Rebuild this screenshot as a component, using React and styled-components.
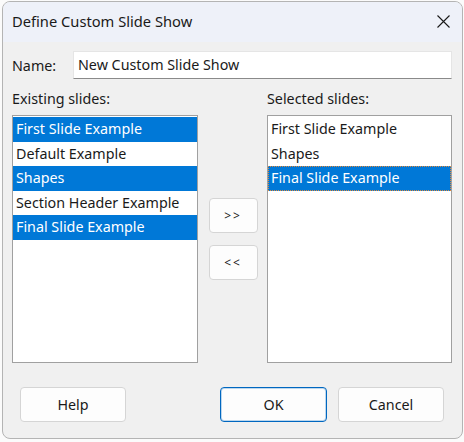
import React from "react";
import styled, { createGlobalStyle } from "styled-components";

const existingSlides = [
  { name: "First Slide Example", selected: true },
  { name: "Default Example", selected: false },
  { name: "Shapes", selected: true },
  { name: "Section Header Example", selected: false },
  { name: "Final Slide Example", selected: true },
];

const selectedSlides = [
  { name: "First Slide Example", selected: false },
  { name: "Shapes", selected: false },
  { name: "Final Slide Example", selected: true, focused: true },
];

const GlobalStyle = createGlobalStyle`
  body {
    margin: 0;
    background: #fbfbfb;
    font-family: "Noto Sans", "Open Sans", sans-serif;
  }
`;

const Window = styled.div`
  box-sizing: border-box;
  width: 461px;
  height: 438px;
  margin: 1px 0 0 2px;
  border: 1px solid #b4b4b4;
  border-radius: 8px;
  overflow: hidden;
  background: #f0f0f0;
  display: flex;
  flex-direction: column;
  color: #1a1a1a;
`;

const TitleBar = styled.div`
  height: 38px;
  flex-shrink: 0;
  background: #eef1f9;
  display: flex;
  align-items: center;
  justify-content: space-between;
  padding: 0 11px 2px 9px;
  font-size: 14.7px;
`;

const CloseButton = styled.button`
  border: 0;
  background: transparent;
  padding: 0;
  width: 16px;
  height: 16px;
  display: flex;
  align-items: center;
  justify-content: center;
`;

const Body = styled.div`
  flex: 1;
  display: flex;
  flex-direction: column;
  padding: 9px 10px 16px 9px;
  font-size: 14.3px;
`;

const NameRow = styled.div`
  display: flex;
  align-items: center;
  height: 28px;
`;

const NameLabel = styled.label`
  width: 61px;
`;

const NameInput = styled.input`
  flex: 1;
  box-sizing: border-box;
  height: 28px;
  border: 1px solid #e5e5e5;
  border-bottom-color: #8a8a8a;
  background: #fff;
  font: inherit;
  color: #1a1a1a;
  padding: 0 4px 2px;
  outline: none;
`;

const ListsArea = styled.div`
  display: grid;
  grid-template-columns: 186px 1fr 185px;
  grid-template-rows: auto 248px;
  margin-top: 7px;
`;

const ListLabel = styled.div`
  height: 29px;
  line-height: 26px;
`;

const ListBox = styled.div`
  box-sizing: border-box;
  border: 1px solid #a0a0a0;
  background: #fff;
  padding-top: 1px;
`;

const ListItem = styled.div`
  box-sizing: border-box;
  height: 24.5px;
  line-height: 23px;
  padding: 0 3px;
  white-space: nowrap;
  background: ${(p) => (p.$selected ? "#0078d7" : "transparent")};
  color: ${(p) => (p.$selected ? "#fff" : "#1a1a1a")};
  outline: ${(p) => (p.$focused ? "1px dotted #e08a3c" : "none")};
  outline-offset: -1px;
`;

const MoveButtons = styled.div`
  display: flex;
  flex-direction: column;
  align-items: center;
  justify-content: center;
  gap: 12px;
  padding-left: 1px;
`;

const Button = styled.button`
  box-sizing: border-box;
  width: ${(p) => p.$width || 106}px;
  height: 35px;
  border: 1px solid ${(p) => (p.$primary ? "#0067c0" : "#d5d5d5")};
  box-shadow: ${(p) => (p.$primary ? "inset 0 0 0 1px rgba(0,103,192,0.25)" : "none")};
  border-radius: 4px;
  background: #fdfdfd;
  font: inherit;
  font-size: ${(p) => (p.$small ? "12px" : "14.3px")};
  color: #1a1a1a;
  padding: 0;
  letter-spacing: ${(p) => (p.$small ? "2px" : "0")};
`;

const Footer = styled.div`
  display: flex;
  align-items: center;
  margin-top: auto;
  padding: 0 8px 0 8px;
`;

const Spacer = styled.div`
  flex: 1;
`;

const FooterGap = styled.div`
  width: 11px;
`;

function SlideList({ items }) {
  return (
    <ListBox>
      {items.map((item) => (
        <ListItem key={item.name} $selected={item.selected} $focused={item.focused}>
          {item.name}
        </ListItem>
      ))}
    </ListBox>
  );
}

export default function App() {
  return (
    <>
      <GlobalStyle />
      <Window>
        <TitleBar>
          <span>Define Custom Slide Show</span>
          <CloseButton aria-label="Close">
            <svg width="13" height="13" viewBox="0 0 13 13">
              <path d="M0.5 0.5 L12.5 12.5 M12.5 0.5 L0.5 12.5" stroke="#1a1a1a" strokeWidth="1.1" />
            </svg>
          </CloseButton>
        </TitleBar>
        <Body>
          <NameRow>
            <NameLabel>Name:</NameLabel>
            <NameInput defaultValue="New Custom Slide Show" />
          </NameRow>
          <ListsArea>
            <ListLabel>Existing slides:</ListLabel>
            <div />
            <ListLabel>Selected slides:</ListLabel>
            <SlideList items={existingSlides} />
            <MoveButtons>
              <Button $width={49} $small>&gt;&gt;</Button>
              <Button $width={49} $small>&lt;&lt;</Button>
            </MoveButtons>
            <SlideList items={selectedSlides} />
          </ListsArea>
          <Footer>
            <Button>Help</Button>
            <Spacer />
            <Button $width={107} $primary>OK</Button>
            <FooterGap />
            <Button>Cancel</Button>
          </Footer>
        </Body>
      </Window>
    </>
  );
}
